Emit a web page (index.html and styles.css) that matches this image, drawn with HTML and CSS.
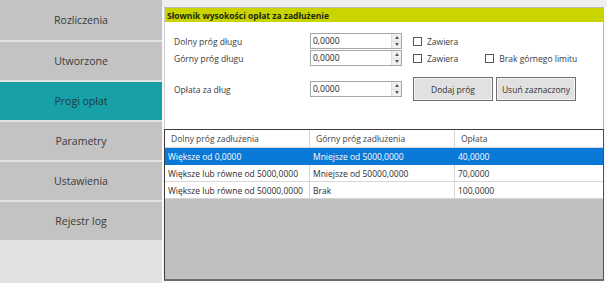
FILE: index.html
```html
<!DOCTYPE html>
<html lang="pl">
<head>
<meta charset="utf-8">
<title>Progi opłat</title>
<link rel="stylesheet" href="styles.css">
</head>
<body>
<div class="app">
  <nav class="sidebar">
    <div class="nav-item first">Rozliczenia</div>
    <div class="nav-item">Utworzone</div>
    <div class="nav-item active">Progi opłat</div>
    <div class="nav-item">Parametry</div>
    <div class="nav-item">Ustawienia</div>
    <div class="nav-item">Rejestr log</div>
  </nav>
  <main class="main">
    <section class="panel">
      <div class="panel-title">Słownik wysokości opłat za zadłużenie</div>
      <div class="form">
        <div class="form-row r1">
          <span class="label">Dolny próg długu</span>
          <div class="num"><span class="num-val">0,0000</span><span class="spin"><i class="up"></i><i class="down"></i></span></div>
          <label class="check"><span class="box"></span>Zawiera</label>
        </div>
        <div class="form-row r2">
          <span class="label">Górny próg długu</span>
          <div class="num"><span class="num-val">0,0000</span><span class="spin"><i class="up"></i><i class="down"></i></span></div>
          <label class="check"><span class="box"></span>Zawiera</label>
          <label class="check extra"><span class="box"></span>Brak górnego limitu</label>
        </div>
        <div class="form-row r3">
          <span class="label">Opłata za dług</span>
          <div class="num"><span class="num-val">0,0000</span><span class="spin"><i class="up"></i><i class="down"></i></span></div>
          <button class="btn add">Dodaj próg</button>
          <button class="btn del">Usuń zaznaczony</button>
        </div>
      </div>
      <div class="grid">
        <div class="row head">
          <div class="cell c1">Dolny próg zadłużenia</div>
          <div class="cell c2">Górny próg zadłużenia</div>
          <div class="cell c3">Opłata</div>
        </div>
        <div class="row sel">
          <div class="cell c1">Większe od 0,0000</div>
          <div class="cell c2">Mniejsze od 5000,0000</div>
          <div class="cell c3">40,0000</div>
        </div>
        <div class="row">
          <div class="cell c1">Większe lub równe od 5000,0000</div>
          <div class="cell c2">Mniejsze od 50000,0000</div>
          <div class="cell c3">70,0000</div>
        </div>
        <div class="row">
          <div class="cell c1">Większe lub równe od 50000,0000</div>
          <div class="cell c2">Brak</div>
          <div class="cell c3">100,0000</div>
        </div>
        <div class="grid-empty"></div>
      </div>
    </section>
  </main>
</div>
</body>
</html>
```
FILE: styles.css
```css
* { box-sizing: border-box; }
html, body { margin: 0; padding: 0; }
body {
  width: 607px;
  height: 283px;
  overflow: hidden;
  background: #f4f4f4;
  font-family: "Open Sans", "DejaVu Sans", sans-serif;
  color: #333;
}
.app {
  display: flex;
  height: 283px;
}
.sidebar {
  width: 162px;
  flex: none;
  background: #e2e2e2;
  display: flex;
  flex-direction: column;
  gap: 2px;
}
.nav-item {
  height: 38px;
  background: #c3c3c3;
  display: flex;
  align-items: center;
  justify-content: center;
  font-size: 10.5px;
  color: #3a3a3a;
}
.nav-item.first { height: 40px; }
.nav-item.active { background: #17a1a7; color: #1c3b3d; }
.main {
  flex: 1;
  padding: 7px 3px 2px 2px;
  background: linear-gradient(#eeeeee, #eeeeee) top/100% 7px no-repeat, #fafafa;
}
.panel {
  height: 100%;
  border: 1px solid #b9b9b9;
  border-bottom: none;
  border-left: 1px solid #cfcfcf;
  display: flex;
  flex-direction: column;
  background: #fff;
}
.panel-title {
  height: 14px;
  background: #c9d400;
  font-size: 8.5px;
  font-weight: bold;
  color: #1e2a10;
  padding: 0 0 0 2px;
  display: flex;
  align-items: center;
}
.form {
  height: 107px;
  font-size: 8.5px;
  color: #3a3a3a;
}
.form-row {
  display: flex;
  align-items: center;
  height: 16px;
  padding-left: 9px;
}
.r1 { margin-top: 11px; }
.r2 { margin-top: 1px; }
.r3 { margin-top: 15px; height: 16px; }
.label { width: 136px; flex: none; }
.num {
  width: 92px;
  height: 16px;
  flex: none;
  border: 1px solid #a7a7a7;
  display: flex;
  background: #fff;
}
.num-val { flex: 1; padding-left: 2px; line-height: 14px; color: #222; }
.spin {
  width: 10px;
  border-left: 1px solid #ddd;
  display: flex;
  flex-direction: column;
  background: #f0f0f0;
}
.spin i {
  flex: 1;
  display: flex;
  align-items: center;
  justify-content: center;
}
.spin i.up { border-bottom: 1px solid #ddd; }
.spin i::before {
  content: "";
  border-left: 2.5px solid transparent;
  border-right: 2.5px solid transparent;
}
.spin i.up::before { border-bottom: 3px solid #555; }
.spin i.down::before { border-top: 3px solid #555; }
.check {
  display: flex;
  align-items: center;
  margin-left: 11px;
}
.check .box {
  width: 9px;
  height: 9px;
  border: 1px solid #555;
  background: #fff;
  margin-right: 5px;
}
.check.extra { margin-left: 27px; }
.btn {
  height: 24px;
  width: 80px;
  margin: 0;
  padding: 0;
  background: #e1e1e1;
  border: 1px solid #6f6f6f;
  box-shadow: inset 0 0 0 1px #f3f3f3;
  font-family: inherit;
  font-size: 8.5px;
  color: #333;
}
.btn.add { margin-left: 11px; }
.btn.del { margin-left: 3px; width: 80px; }
.grid {
  flex: 1;
  border: 1px solid #3c3c3c;
  border-bottom: 2px solid #6e6e6e;
  border-right: 1px solid #505050;
  background: #c0c0c0;
  display: flex;
  flex-direction: column;
  margin: 0 -1px 0 -1px;
  font-size: 8.5px;
}
.row {
  display: flex;
  height: 17px;
  background: #fff;
  border-bottom: 1px solid #d6d6d6;
  color: #2c2c2c;
}
.row.head { height: 18px; color: #444; }
.row.sel { background: #0a78d6; color: #fff; border-bottom-color: #0a78d6; }
.cell {
  display: flex;
  align-items: center;
  padding-left: 3px;
  white-space: nowrap;
  overflow: hidden;
}
.head .cell { padding-left: 6px; }
.c1 { width: 145px; border-right: 1px solid #d6d6d6; }
.c2 { width: 145px; border-right: 1px solid #d6d6d6; }
.c3 { flex: 1; }
.sel .c1, .sel .c2 { border-right-color: #0a78d6; }
.grid-empty { flex: 1; }
```
